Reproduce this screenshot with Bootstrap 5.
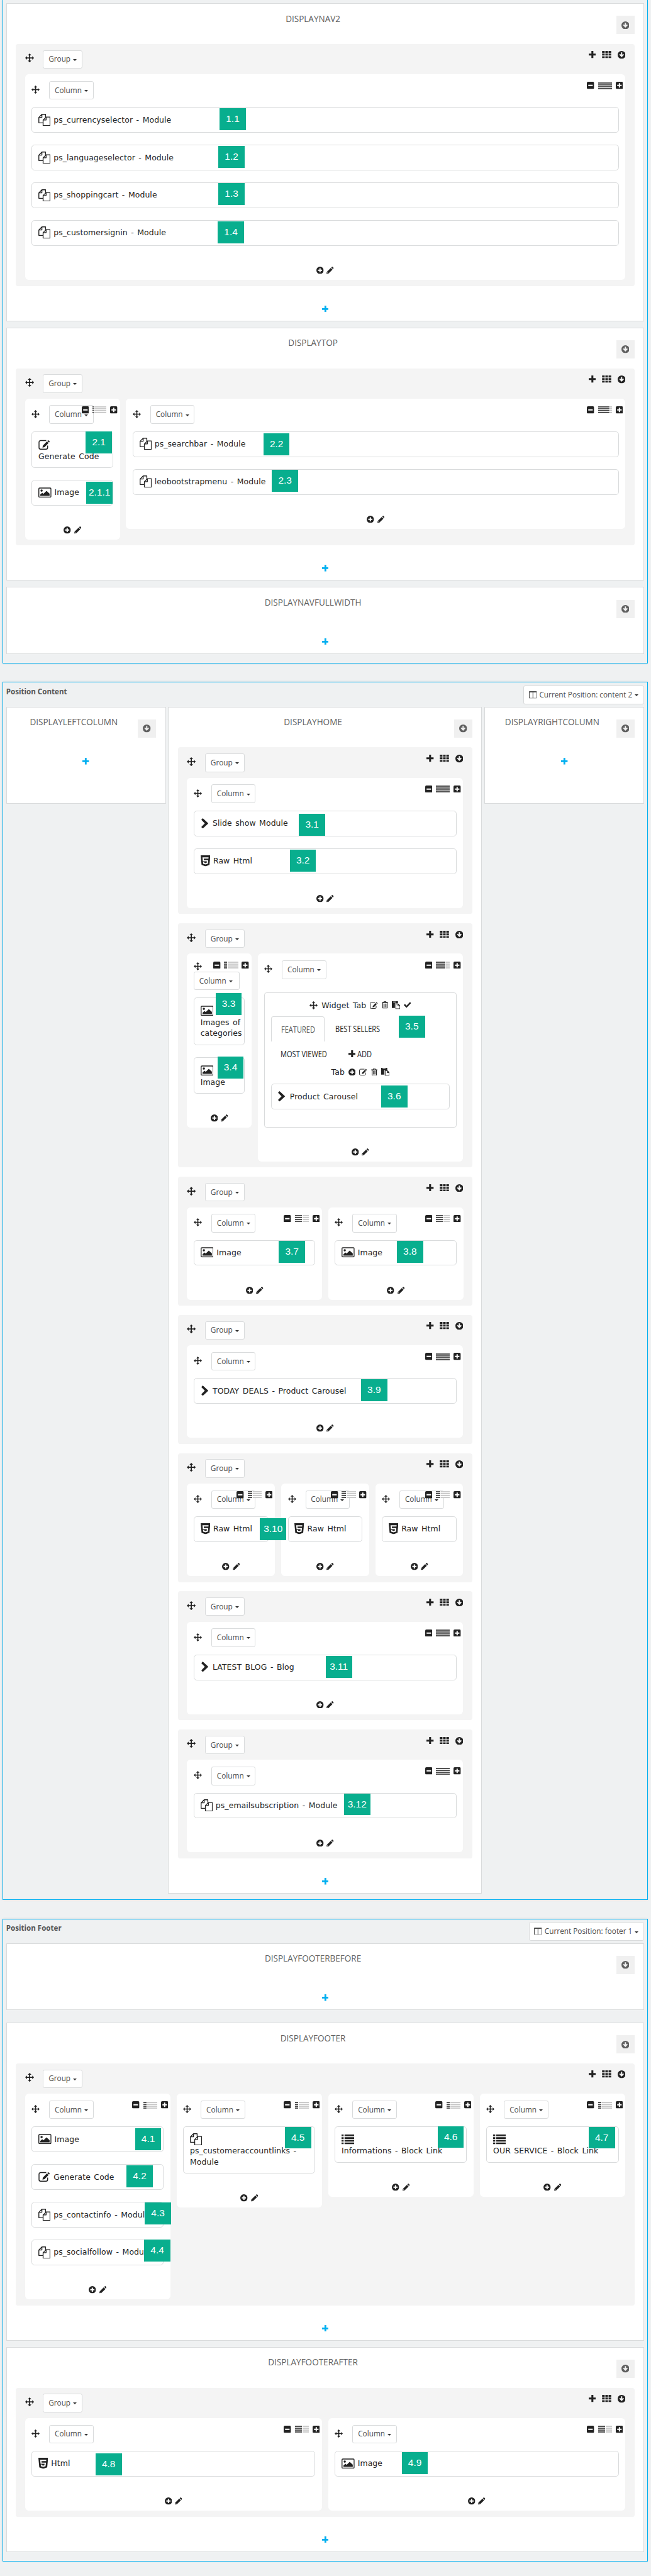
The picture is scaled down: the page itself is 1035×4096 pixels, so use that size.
<!DOCTYPE html>
<html lang="en">
<head>
<meta charset="utf-8">
<meta name="viewport" content="width=device-width, initial-scale=1">
<title>Position editor</title>
<link rel="stylesheet" href="https://cdn.jsdelivr.net/npm/bootstrap@5.3.0/dist/css/bootstrap.min.css">
<style>
html{font-size:9.673px}
body{background:#eff1f2;font-family:"Open Sans",sans-serif;font-size:1.2rem;color:#222;line-height:1.8rem;overflow-x:hidden}
svg{display:block;fill:currentColor;flex:none}
.zone{border:1px solid #00aff0;margin:0 .52rem 3.03rem .4rem;padding:0 .5rem 1.5rem;box-shadow:0 0 .4rem rgba(0,0,0,.08)}
.zone-top{border-top:0;padding-top:.52rem}
.zone-mid{padding-bottom:.96rem}
.zone-last{margin-bottom:0}
.zone-head{height:3.95rem;color:#555}
.zone-head h2{font-size:1.2rem;font-weight:700;line-height:1.8rem;margin:.55rem 0 0}
.zone-head .dd{margin-top:.5rem}
.hook{background:#fff;border:1px solid #d9dbdc;padding:0 1.5rem}
.hook+.hook{margin-top:1.03rem}
.hook+.hook.far{margin-top:2.07rem}
.hook-head{height:6.6rem}
.hook-head h3{font-size:1.4rem;font-weight:400;line-height:2rem;color:#606060;margin:1.5rem 1rem 0 0;white-space:nowrap}
.hook-btn{width:3rem;height:3rem;margin-top:2rem;background:#f0f0f0;color:#606060}
.hook-foot{height:5.68rem;padding-top:3.2rem;color:#00aff0}
.hook-empty .hook-head{height:5.1rem}
.side{width:26.25rem}
.side .hook-foot{height:10.7rem}
.home{width:51.6rem}
.hooks .hook+.hook{margin-top:0}
.grp{background:#f4f4f4;border-radius:.4rem;padding:1rem 1.5rem 1rem}
.grp+.grp{margin-top:1.52rem}
.grp-head{height:4rem}
.grp-head .mv{margin:.6rem 1.5rem 0 0}
.grp-tools{gap:1rem;margin-top:.2rem}
.dd{background:#fff;border:1px solid #d9dbdc;border-radius:.3rem;height:3.05rem;padding:0 .8rem;color:#4c4c4c;font-size:1.22rem;line-height:1;display:inline-flex;align-items:center;white-space:nowrap}
.dd::after{content:"";border:.4rem solid transparent;border-top-color:#333;border-bottom:0;margin-left:.42rem;margin-top:.2rem}
.cols{gap:1rem}
.colbox{background:#fff;border-radius:.6rem;padding:1.1rem 1.1rem 0;flex:1 1 0;min-width:0}
.c-nar{flex:0 0 15.6rem}
.c-slim{flex:0 0 10.6rem}
.col-head{height:4.3rem}
.col-head .mv{margin:.75rem 1.55rem 0 0}
.col-tools{position:absolute;top:1.25rem;right:.4rem;gap:.6rem;color:#222}
.bars{width:2.3rem;height:11px;background:repeating-linear-gradient(transparent 0 2px,#fff 2px 3px),linear-gradient(to right,#555 var(--w),#fff var(--w) calc(var(--w) + 1px),#ccc 0)}
.c-slim .col-head{height:6.1rem;flex-direction:column}
.c-slim .col-head .mv{margin:.25rem 0 .25rem}
.c-slim .col-head .dd{width:7.6rem}
.wgt{position:relative;border:1px solid #d9dbdc;border-radius:.5rem;min-height:4.2rem;margin-bottom:2rem;padding:0 0 .1rem 1rem;gap:.5rem;white-space:nowrap;background:#fff}
.wtx{font-family:"DejaVu Sans",sans-serif;font-size:1.29rem;letter-spacing:.005em;word-spacing:.15rem;color:#222}
.stacked{flex-direction:column;align-items:flex-start;gap:0;padding:1rem 0 .9rem 1rem}
.stacked svg{margin:.2rem 0}
.stacked .i-fi{margin:0}
.num{position:absolute;width:4.3rem;height:3.6rem;background:#08ae8e;color:#fff;font:1.6rem/3.5rem "Liberation Sans",Arial,sans-serif;text-align:center;z-index:3}
.col-foot{height:3.6rem;padding-top:1.45rem;gap:.5rem}
.panel{position:relative;border:1px solid #d9dbdc;border-radius:.4rem;margin:1rem 0 2rem;padding:1rem 1rem 1.05rem;height:22.15rem}
.pline{gap:.6rem;height:1.9rem}
.pline-tab{margin-bottom:1rem}
.tabs{margin:.9rem 0 0;padding:0;list-style:none}
.tabs li{height:4.1rem;line-height:4.1rem;padding-left:1.6rem;margin-right:.2rem;font-size:1.45rem;white-space:nowrap}
.tabs .on{border:1px solid #d9dbdc;border-bottom:0;border-radius:.4rem .4rem 0 0;color:#555;width:8.8rem}
.slimtext{display:inline-block;transform:scaleX(.79);transform-origin:left}
.t2{width:12rem}
.t3{width:10.9rem}
.i-mv{width:1.47rem;height:1.47rem}
.i-mc{width:1.35rem;height:1.35rem}
.i-12{width:1.2rem;height:1.2rem}
.i-11{width:1.1rem;height:1.1rem}
.i-gr{width:1.55rem;height:1.2rem}
.i-13{width:1.3rem;height:1.3rem}
.i-fi{width:2rem;height:2rem}
.i-im{width:2.15rem;height:1.7rem}
.i-h5{width:1.6rem;height:1.8rem}
.i-ch{width:1.2rem;height:1.7rem;margin-left:.1rem;margin-right:.2rem}
.i-ed{width:2rem;height:1.65rem}
.i-li{width:2.1rem;height:1.6rem}
.i-pa{width:1.4rem;height:1.3rem}
.i-tr{width:1.05rem;height:1.2rem}
.i-cl{width:1.3rem;height:1.2rem;margin-right:.4rem}
.i-es{width:1.35rem;height:1.15rem}
</style>
</head>
<body>
<svg width="0" height="0" class="position-absolute">
<symbol id="mv" viewBox="0 0 16 16"><path d="M8 0l3.2 3.3H9v3.7h3.7V4.8L16 8l-3.3 3.2V9H9v3.7h2.2L8 16l-3.2-3.3H7V9H3.3v2.2L0 8l3.3-3.2V7H7V3.3H4.8z"/></symbol>
<symbol id="pl" viewBox="0 0 12 12"><path d="M4.4 0h3.200v4.400H12v3.200H7.600V12H4.400V7.600H0V4.400h4.400z"/></symbol>
<symbol id="gr" viewBox="0 0 15 12"><path d="M0 0h4.300v3.300H0zM5.400 0h4.200v3.300H5.400zM10.700 0H15v3.300h-4.300zM0 4.400h4.300v3.200H0zM5.400 4.400h4.200v3.200H5.400zM10.700 4.400H15v3.200h-4.300zM0 8.700h4.300V12H0zM5.400 8.700h4.200V12H5.400zM10.700 8.700H15V12h-4.300z"/></symbol>
<symbol id="dn" viewBox="0 0 13 13"><path fill-rule="evenodd" d="M6.500 0a6.500 6.500 0 1 1 0 13 6.500 6.500 0 0 1 0-13zM5.500 2.300v4L4 4.900 2.600 6.300l3.900 4 3.900-4L9 4.900 7.500 6.300v-4z"/></symbol>
<symbol id="cp" viewBox="0 0 12 12"><path fill-rule="evenodd" d="M6 0a6 6 0 1 1 0 12A6 6 0 0 1 6 0zM5 2.600V5H2.600v2H5v2.400h2V7h2.400V5H7V2.600z"/></symbol>
<symbol id="sm" viewBox="0 0 12 12"><path fill-rule="evenodd" d="M2 0h8a2 2 0 0 1 2 2v8a2 2 0 0 1-2 2H2a2 2 0 0 1-2-2V2a2 2 0 0 1 2-2zM2.300 5v2h7.400V5z"/></symbol>
<symbol id="sp" viewBox="0 0 12 12"><path fill-rule="evenodd" d="M2 0h8a2 2 0 0 1 2 2v8a2 2 0 0 1-2 2H2a2 2 0 0 1-2-2V2a2 2 0 0 1 2-2zM5 2.300V5H2.300v2H5v2.700h2V7h2.700V5H7V2.300z"/></symbol>
<symbol id="pe" viewBox="0 0 12 12"><path fill-rule="evenodd" d="M8.800.5a1.100 1.100 0 0 1 1.600 0l1.100 1.100a1.100 1.100 0 0 1 0 1.600l-.9.9-2.700-2.700zM7.200 2.100l2.700 2.700L3.200 11.500 0 12l.5-3.200zM1.600 9.300l-.3 1.400 1.400-.3z"/></symbol>
<symbol id="fi" viewBox="0 0 20 20"><path fill="none" stroke="currentColor" stroke-width="1.400" stroke-linejoin="round" d="M7.500 14.800H.8V5.800l5-5h6v4.500M5.800.8v5h-5M12.700 5.300h6.500v13.900H7.800v-9zM12.700 5.300v4.900H7.800"/></symbol>
<symbol id="im" viewBox="0 0 22 17"><rect x=".8" y=".8" width="20.400" height="15.400" rx="1.300" fill="none" stroke="currentColor" stroke-width="1.500"/><circle cx="5.400" cy="5.200" r="1.900"/><path d="M3.200 14v-2.300l3.300-3 2 2L13.700 5.500l5.200 5V14z"/></symbol>
<symbol id="h5" viewBox="0 0 16 18"><path fill-rule="evenodd" d="M0 0h16l-1.500 15.800L8 18l-6.500-2.200zM3 3.300l.6 6.600h6.600l-.3 2.400-1.900.6-1.900-.6-.1-1.200H3.900l.3 2.800L8 15l3.800-1.100.7-6H5.300l-.2-2.500h7.700l.2-2.100z"/></symbol>
<symbol id="ch" viewBox="0 0 12 17"><path d="M2.500 0L11.700 8.500 2.500 17 0 14.500l5.800-6L0 2.500z"/></symbol>
<symbol id="ed" viewBox="0 0 20 17"><path fill="none" stroke="currentColor" stroke-width="1.500" d="M13 1.600H3.500A2.700 2.700 0 0 0 .8 4.300v9.200a2.700 2.700 0 0 0 2.700 2.700h9.200a2.700 2.700 0 0 0 2.700-2.700V10"/><path d="M16.300.8l2.900 2.600-1.500 1.600-2.900-2.600zM14 3.200l2.900 2.600-6.700 7-3.600.7.700-3.500z"/></symbol>
<symbol id="li" viewBox="0 0 21 16"><path d="M0 0h3.400v2.800H0zM5 0h16v2.800H5zM0 4.400h3.400v2.800H0zM5 4.400h16v2.800H5zM0 8.800h3.400v2.800H0zM5 8.800h16v2.800H5zM0 13.200h3.400V16H0zM5 13.200h16V16H5z"/></symbol>
<symbol id="tr" viewBox="0 0 10 12"><path fill-rule="evenodd" d="M3.200 0h3.600l.7 1.600H10v1.200h-.8V11q0 1-1 1H1.800q-1 0-1-1V2.800H0V1.600h2.500zM2 3v7.800h6V3zM2.800 4h.9v5.800h-.9zM4.600 4h.9v5.800h-.9zM6.400 4h.9v5.800h-.9zM3.800 1.600h2.400l-.2-.7H4z"/></symbol>
<symbol id="pa" viewBox="0 0 14 13"><path fill-rule="evenodd" d="M0 0h10v3.600H5V11H0zM2.300.8v1h5v-1z"/><path fill="none" stroke="currentColor" stroke-width="1.100" d="M6.500 4.700h3.800l3 3v4.700H6.500zM10.200 4.700v3.100h3.100"/></symbol>
<symbol id="ck" viewBox="0 0 12 10"><path d="M4.500 9.800L0 5.400l1.800-1.900 2.700 2.700L10.200.3 12 2.200z"/></symbol>
<symbol id="cl" viewBox="0 0 13 12"><path fill-rule="evenodd" d="M1 0h11q1 0 1 1v10q0 1-1 1H1q-1 0-1-1V1q0-1 1-1zM1 2v9h5V2zM7 2v9h5V2z"/></symbol>
</svg>

<main>
<section class="zone zone-top">
 <div class="hook">
  <div class="hook-head d-flex align-items-start"><h3 class="flex-fill text-center">DISPLAYNAV2</h3><span class="hook-btn d-flex align-items-center justify-content-center"><svg class="i-13"><use href="#dn"/></svg></span></div>
  <div class="grp">
   <div class="grp-head d-flex align-items-start"><svg class="i-mv mv"><use href="#mv"/></svg><span class="dd">Group</span><span class="grp-tools d-flex ms-auto"><svg class="i-12"><use href="#pl"/></svg><svg class="i-gr"><use href="#gr"/></svg><svg class="i-13"><use href="#dn"/></svg></span></div>
   <div class="cols d-flex align-items-start">
    <div class="colbox position-relative">
     <div class="col-head d-flex align-items-start"><svg class="i-mc mv"><use href="#mv"/></svg><span class="dd">Column</span></div>
     <div class="col-tools d-flex align-items-center"><svg class="i-12"><use href="#sm"/></svg><span class="bars" style="--w:100%"></span><svg class="i-12"><use href="#sp"/></svg></div>
     <div class="wgt d-flex align-items-center"><svg class="i-fi"><use href="#fi"/></svg><span class="wtx">ps_currencyselector - Module</span><span class="num" style="left:30.8rem;top:.1rem">1.1</span></div>
     <div class="wgt d-flex align-items-center"><svg class="i-fi"><use href="#fi"/></svg><span class="wtx">ps_languageselector - Module</span><span class="num" style="left:30.6rem;top:.1rem">1.2</span></div>
     <div class="wgt d-flex align-items-center"><svg class="i-fi"><use href="#fi"/></svg><span class="wtx">ps_shoppingcart - Module</span><span class="num" style="left:30.6rem;top:0">1.3</span></div>
     <div class="wgt d-flex align-items-center"><svg class="i-fi"><use href="#fi"/></svg><span class="wtx">ps_customersignin - Module</span><span class="num" style="left:30.5rem;top:.1rem">1.4</span></div>
     <div class="col-foot d-flex justify-content-center"><svg class="i-12"><use href="#cp"/></svg><svg class="i-12"><use href="#pe"/></svg></div>
    </div>
   </div>
  </div>
  <div class="hook-foot d-flex justify-content-center"><svg class="i-11"><use href="#pl"/></svg></div>
 </div>

 <div class="hook">
  <div class="hook-head d-flex align-items-start"><h3 class="flex-fill text-center">DISPLAYTOP</h3><span class="hook-btn d-flex align-items-center justify-content-center"><svg class="i-13"><use href="#dn"/></svg></span></div>
  <div class="grp">
   <div class="grp-head d-flex align-items-start"><svg class="i-mv mv"><use href="#mv"/></svg><span class="dd">Group</span><span class="grp-tools d-flex ms-auto"><svg class="i-12"><use href="#pl"/></svg><svg class="i-gr"><use href="#gr"/></svg><svg class="i-13"><use href="#dn"/></svg></span></div>
   <div class="cols d-flex align-items-start">
    <div class="colbox c-nar position-relative">
     <div class="col-head d-flex align-items-start"><svg class="i-mc mv"><use href="#mv"/></svg><span class="dd">Column</span></div>
     <div class="col-tools d-flex align-items-center"><svg class="i-12"><use href="#sm"/></svg><span class="bars" style="--w:10%"></span><svg class="i-12"><use href="#sp"/></svg></div>
     <div class="wgt d-flex stacked"><svg class="i-ed"><use href="#ed"/></svg><span class="wtx">Generate Code</span><span class="num" style="left:8.8rem;top:-.1rem">2.1</span></div>
     <div class="wgt d-flex align-items-center"><svg class="i-im"><use href="#im"/></svg><span class="wtx">Image</span><span class="num" style="left:8.9rem;top:.2rem">2.1.1</span></div>
     <div class="col-foot d-flex justify-content-center"><svg class="i-12"><use href="#cp"/></svg><svg class="i-12"><use href="#pe"/></svg></div>
    </div>
    <div class="colbox position-relative">
     <div class="col-head d-flex align-items-start"><svg class="i-mc mv"><use href="#mv"/></svg><span class="dd">Column</span></div>
     <div class="col-tools d-flex align-items-center"><svg class="i-12"><use href="#sm"/></svg><span class="bars" style="--w:81%"></span><svg class="i-12"><use href="#sp"/></svg></div>
     <div class="wgt d-flex align-items-center"><svg class="i-fi"><use href="#fi"/></svg><span class="wtx">ps_searchbar - Module</span><span class="num" style="left:21.4rem;top:.2rem">2.2</span></div>
     <div class="wgt d-flex align-items-center"><svg class="i-fi"><use href="#fi"/></svg><span class="wtx">leobootstrapmenu - Module</span><span class="num" style="left:22.8rem;top:0">2.3</span></div>
     <div class="col-foot d-flex justify-content-center"><svg class="i-12"><use href="#cp"/></svg><svg class="i-12"><use href="#pe"/></svg></div>
    </div>
   </div>
  </div>
  <div class="hook-foot d-flex justify-content-center"><svg class="i-11"><use href="#pl"/></svg></div>
 </div>

 <div class="hook hook-empty">
  <div class="hook-head d-flex align-items-start"><h3 class="flex-fill text-center">DISPLAYNAVFULLWIDTH</h3><span class="hook-btn d-flex align-items-center justify-content-center"><svg class="i-13"><use href="#dn"/></svg></span></div>
  <div class="hook-foot d-flex justify-content-center"><svg class="i-11"><use href="#pl"/></svg></div>
 </div>
</section>

<section class="zone zone-mid">
 <div class="zone-head d-flex align-items-start justify-content-between"><h2>Position Content</h2><span class="dd"><svg class="i-cl"><use href="#cl"/></svg>Current Position: content 2</span></div>
 <div class="hooks d-flex align-items-start justify-content-between">
  <div class="hook hook-empty side">
   <div class="hook-head d-flex align-items-start"><h3 class="flex-fill text-center">DISPLAYLEFTCOLUMN</h3><span class="hook-btn d-flex align-items-center justify-content-center"><svg class="i-13"><use href="#dn"/></svg></span></div>
   <div class="hook-foot d-flex justify-content-center"><svg class="i-11"><use href="#pl"/></svg></div>
  </div>
  <div class="hook home">
   <div class="hook-head d-flex align-items-start"><h3 class="flex-fill text-center">DISPLAYHOME</h3><span class="hook-btn d-flex align-items-center justify-content-center"><svg class="i-13"><use href="#dn"/></svg></span></div>
   <div class="grp">
    <div class="grp-head d-flex align-items-start"><svg class="i-mv mv"><use href="#mv"/></svg><span class="dd">Group</span><span class="grp-tools d-flex ms-auto"><svg class="i-12"><use href="#pl"/></svg><svg class="i-gr"><use href="#gr"/></svg><svg class="i-13"><use href="#dn"/></svg></span></div>
    <div class="cols d-flex align-items-start">
     <div class="colbox position-relative">
      <div class="col-head d-flex align-items-start"><svg class="i-mc mv"><use href="#mv"/></svg><span class="dd">Column</span></div>
      <div class="col-tools d-flex align-items-center"><svg class="i-12"><use href="#sm"/></svg><span class="bars" style="--w:100%"></span><svg class="i-12"><use href="#sp"/></svg></div>
      <div class="wgt d-flex align-items-center"><svg class="i-ch"><use href="#ch"/></svg><span class="wtx">Slide show Module</span><span class="num" style="left:17.2rem;top:.4rem">3.1</span></div>
      <div class="wgt d-flex align-items-center"><svg class="i-h5"><use href="#h5"/></svg><span class="wtx">Raw Html</span><span class="num" style="left:15.7rem;top:.1rem">3.2</span></div>
      <div class="col-foot d-flex justify-content-center"><svg class="i-12"><use href="#cp"/></svg><svg class="i-12"><use href="#pe"/></svg></div>
     </div>
    </div>
   </div>
   <div class="grp">
    <div class="grp-head d-flex align-items-start"><svg class="i-mv mv"><use href="#mv"/></svg><span class="dd">Group</span><span class="grp-tools d-flex ms-auto"><svg class="i-12"><use href="#pl"/></svg><svg class="i-gr"><use href="#gr"/></svg><svg class="i-13"><use href="#dn"/></svg></span></div>
    <div class="cols d-flex align-items-start">
     <div class="colbox c-slim position-relative">
      <div class="col-head d-flex"><svg class="i-mc mv"><use href="#mv"/></svg><span class="dd">Column</span></div>
      <div class="col-tools d-flex align-items-center"><svg class="i-12"><use href="#sm"/></svg><span class="bars" style="--w:22%"></span><svg class="i-12"><use href="#sp"/></svg></div>
      <div class="wgt d-flex stacked"><svg class="i-im"><use href="#im"/></svg><span class="wtx">Images of<br>categories</span><span class="num" style="left:3.5rem;top:-.8rem">3.3</span></div>
      <div class="wgt d-flex stacked"><svg class="i-im"><use href="#im"/></svg><span class="wtx">Image</span><span class="num" style="left:3.8rem;top:-.2rem">3.4</span></div>
      <div class="col-foot d-flex justify-content-center"><svg class="i-12"><use href="#cp"/></svg><svg class="i-12"><use href="#pe"/></svg></div>
     </div>
     <div class="colbox position-relative">
      <div class="col-head d-flex align-items-start"><svg class="i-mc mv"><use href="#mv"/></svg><span class="dd">Column</span></div>
      <div class="col-tools d-flex align-items-center"><svg class="i-12"><use href="#sm"/></svg><span class="bars" style="--w:66%"></span><svg class="i-12"><use href="#sp"/></svg></div>
      <div class="panel">
       <div class="pline d-flex align-items-center justify-content-center"><svg class="i-mc"><use href="#mv"/></svg><span class="wtx">Widget Tab</span><svg class="i-es"><use href="#ed"/></svg><svg class="i-tr"><use href="#tr"/></svg><svg class="i-pa"><use href="#pa"/></svg><svg class="i-12"><use href="#ck"/></svg></div>
       <ul class="tabs d-flex flex-wrap">
        <li class="on"><span class="slimtext">FEATURED</span></li>
        <li class="t2"><span class="slimtext">BEST SELLERS</span></li>
        <li class="t3"><span class="slimtext">MOST VIEWED</span></li>
        <li class="d-flex align-items-center"><svg class="i-12 me-1"><use href="#pl"/></svg><span class="slimtext">ADD</span></li>
       </ul>
       <div class="pline pline-tab d-flex align-items-center justify-content-center"><span class="wtx">Tab</span><svg class="i-12"><use href="#cp"/></svg><svg class="i-es"><use href="#ed"/></svg><svg class="i-tr"><use href="#tr"/></svg><svg class="i-pa"><use href="#pa"/></svg></div>
       <div class="wgt d-flex align-items-center"><svg class="i-ch"><use href="#ch"/></svg><span class="wtx">Product Carousel</span><span class="num" style="left:18rem;top:.2rem">3.6</span></div>
       <span class="num" style="left:22rem;top:3.7rem">3.5</span>
      </div>
      <div class="col-foot d-flex justify-content-center"><svg class="i-12"><use href="#cp"/></svg><svg class="i-12"><use href="#pe"/></svg></div>
     </div>
    </div>
   </div>
   <div class="grp">
    <div class="grp-head d-flex align-items-start"><svg class="i-mv mv"><use href="#mv"/></svg><span class="dd">Group</span><span class="grp-tools d-flex ms-auto"><svg class="i-12"><use href="#pl"/></svg><svg class="i-gr"><use href="#gr"/></svg><svg class="i-13"><use href="#dn"/></svg></span></div>
    <div class="cols d-flex align-items-start">
     <div class="colbox position-relative">
      <div class="col-head d-flex align-items-start"><svg class="i-mc mv"><use href="#mv"/></svg><span class="dd">Column</span></div>
      <div class="col-tools d-flex align-items-center"><svg class="i-12"><use href="#sm"/></svg><span class="bars" style="--w:49%"></span><svg class="i-12"><use href="#sp"/></svg></div>
      <div class="wgt d-flex align-items-center"><svg class="i-im"><use href="#im"/></svg><span class="wtx">Image</span><span class="num" style="left:13.9rem;top:0">3.7</span></div>
      <div class="col-foot d-flex justify-content-center"><svg class="i-12"><use href="#cp"/></svg><svg class="i-12"><use href="#pe"/></svg></div>
     </div>
     <div class="colbox position-relative">
      <div class="col-head d-flex align-items-start"><svg class="i-mc mv"><use href="#mv"/></svg><span class="dd">Column</span></div>
      <div class="col-tools d-flex align-items-center"><svg class="i-12"><use href="#sm"/></svg><span class="bars" style="--w:49%"></span><svg class="i-12"><use href="#sp"/></svg></div>
      <div class="wgt d-flex align-items-center"><svg class="i-im"><use href="#im"/></svg><span class="wtx">Image</span><span class="num" style="left:10.1rem;top:0">3.8</span></div>
      <div class="col-foot d-flex justify-content-center"><svg class="i-12"><use href="#cp"/></svg><svg class="i-12"><use href="#pe"/></svg></div>
     </div>
    </div>
   </div>
   <div class="grp">
    <div class="grp-head d-flex align-items-start"><svg class="i-mv mv"><use href="#mv"/></svg><span class="dd">Group</span><span class="grp-tools d-flex ms-auto"><svg class="i-12"><use href="#pl"/></svg><svg class="i-gr"><use href="#gr"/></svg><svg class="i-13"><use href="#dn"/></svg></span></div>
    <div class="cols d-flex align-items-start">
     <div class="colbox position-relative">
      <div class="col-head d-flex align-items-start"><svg class="i-mc mv"><use href="#mv"/></svg><span class="dd">Column</span></div>
      <div class="col-tools d-flex align-items-center"><svg class="i-12"><use href="#sm"/></svg><span class="bars" style="--w:100%"></span><svg class="i-12"><use href="#sp"/></svg></div>
      <div class="wgt d-flex align-items-center"><svg class="i-ch"><use href="#ch"/></svg><span class="wtx">TODAY DEALS - Product Carousel</span><span class="num" style="left:27.4rem;top:.1rem">3.9</span></div>
      <div class="col-foot d-flex justify-content-center"><svg class="i-12"><use href="#cp"/></svg><svg class="i-12"><use href="#pe"/></svg></div>
     </div>
    </div>
   </div>
   <div class="grp">
    <div class="grp-head d-flex align-items-start"><svg class="i-mv mv"><use href="#mv"/></svg><span class="dd">Group</span><span class="grp-tools d-flex ms-auto"><svg class="i-12"><use href="#pl"/></svg><svg class="i-gr"><use href="#gr"/></svg><svg class="i-13"><use href="#dn"/></svg></span></div>
    <div class="cols d-flex align-items-start">
     <div class="colbox position-relative">
      <div class="col-head d-flex align-items-start"><svg class="i-mc mv"><use href="#mv"/></svg><span class="dd">Column</span></div>
      <div class="col-tools d-flex align-items-center"><svg class="i-12"><use href="#sm"/></svg><span class="bars" style="--w:30%"></span><svg class="i-12"><use href="#sp"/></svg></div>
      <div class="wgt d-flex align-items-center"><svg class="i-h5"><use href="#h5"/></svg><span class="wtx">Raw Html</span><span class="num" style="left:10.8rem;top:.2rem">3.10</span></div>
      <div class="col-foot d-flex justify-content-center"><svg class="i-12"><use href="#cp"/></svg><svg class="i-12"><use href="#pe"/></svg></div>
     </div>
     <div class="colbox position-relative">
      <div class="col-head d-flex align-items-start"><svg class="i-mc mv"><use href="#mv"/></svg><span class="dd">Column</span></div>
      <div class="col-tools d-flex align-items-center"><svg class="i-12"><use href="#sm"/></svg><span class="bars" style="--w:30%"></span><svg class="i-12"><use href="#sp"/></svg></div>
      <div class="wgt d-flex align-items-center"><svg class="i-h5"><use href="#h5"/></svg><span class="wtx">Raw Html</span></div>
      <div class="col-foot d-flex justify-content-center"><svg class="i-12"><use href="#cp"/></svg><svg class="i-12"><use href="#pe"/></svg></div>
     </div>
     <div class="colbox position-relative">
      <div class="col-head d-flex align-items-start"><svg class="i-mc mv"><use href="#mv"/></svg><span class="dd">Column</span></div>
      <div class="col-tools d-flex align-items-center"><svg class="i-12"><use href="#sm"/></svg><span class="bars" style="--w:30%"></span><svg class="i-12"><use href="#sp"/></svg></div>
      <div class="wgt d-flex align-items-center"><svg class="i-h5"><use href="#h5"/></svg><span class="wtx">Raw Html</span></div>
      <div class="col-foot d-flex justify-content-center"><svg class="i-12"><use href="#cp"/></svg><svg class="i-12"><use href="#pe"/></svg></div>
     </div>
    </div>
   </div>
   <div class="grp">
    <div class="grp-head d-flex align-items-start"><svg class="i-mv mv"><use href="#mv"/></svg><span class="dd">Group</span><span class="grp-tools d-flex ms-auto"><svg class="i-12"><use href="#pl"/></svg><svg class="i-gr"><use href="#gr"/></svg><svg class="i-13"><use href="#dn"/></svg></span></div>
    <div class="cols d-flex align-items-start">
     <div class="colbox position-relative">
      <div class="col-head d-flex align-items-start"><svg class="i-mc mv"><use href="#mv"/></svg><span class="dd">Column</span></div>
      <div class="col-tools d-flex align-items-center"><svg class="i-12"><use href="#sm"/></svg><span class="bars" style="--w:100%"></span><svg class="i-12"><use href="#sp"/></svg></div>
      <div class="wgt d-flex align-items-center"><svg class="i-ch"><use href="#ch"/></svg><span class="wtx">LATEST BLOG - Blog</span><span class="num" style="left:21.6rem;top:.1rem">3.11</span></div>
      <div class="col-foot d-flex justify-content-center"><svg class="i-12"><use href="#cp"/></svg><svg class="i-12"><use href="#pe"/></svg></div>
     </div>
    </div>
   </div>
   <div class="grp">
    <div class="grp-head d-flex align-items-start"><svg class="i-mv mv"><use href="#mv"/></svg><span class="dd">Group</span><span class="grp-tools d-flex ms-auto"><svg class="i-12"><use href="#pl"/></svg><svg class="i-gr"><use href="#gr"/></svg><svg class="i-13"><use href="#dn"/></svg></span></div>
    <div class="cols d-flex align-items-start">
     <div class="colbox position-relative">
      <div class="col-head d-flex align-items-start"><svg class="i-mc mv"><use href="#mv"/></svg><span class="dd">Column</span></div>
      <div class="col-tools d-flex align-items-center"><svg class="i-12"><use href="#sm"/></svg><span class="bars" style="--w:100%"></span><svg class="i-12"><use href="#sp"/></svg></div>
      <div class="wgt d-flex align-items-center"><svg class="i-fi"><use href="#fi"/></svg><span class="wtx">ps_emailsubscription - Module</span><span class="num" style="left:24.6rem;top:0">3.12</span></div>
      <div class="col-foot d-flex justify-content-center"><svg class="i-12"><use href="#cp"/></svg><svg class="i-12"><use href="#pe"/></svg></div>
     </div>
    </div>
   </div>
   <div class="hook-foot d-flex justify-content-center"><svg class="i-11"><use href="#pl"/></svg></div>
  </div>
  <div class="hook hook-empty side">
   <div class="hook-head d-flex align-items-start"><h3 class="flex-fill text-center">DISPLAYRIGHTCOLUMN</h3><span class="hook-btn d-flex align-items-center justify-content-center"><svg class="i-13"><use href="#dn"/></svg></span></div>
   <div class="hook-foot d-flex justify-content-center"><svg class="i-11"><use href="#pl"/></svg></div>
  </div>
 </div>
</section>

<section class="zone zone-last">
 <div class="zone-head d-flex align-items-start justify-content-between"><h2>Position Footer</h2><span class="dd"><svg class="i-cl"><use href="#cl"/></svg>Current Position: footer 1</span></div>
 <div class="hook hook-empty">
  <div class="hook-head d-flex align-items-start"><h3 class="flex-fill text-center">DISPLAYFOOTERBEFORE</h3><span class="hook-btn d-flex align-items-center justify-content-center"><svg class="i-13"><use href="#dn"/></svg></span></div>
  <div class="hook-foot d-flex justify-content-center"><svg class="i-11"><use href="#pl"/></svg></div>
 </div>
 <div class="hook far">
  <div class="hook-head d-flex align-items-start"><h3 class="flex-fill text-center">DISPLAYFOOTER</h3><span class="hook-btn d-flex align-items-center justify-content-center"><svg class="i-13"><use href="#dn"/></svg></span></div>
  <div class="grp">
   <div class="grp-head d-flex align-items-start"><svg class="i-mv mv"><use href="#mv"/></svg><span class="dd">Group</span><span class="grp-tools d-flex ms-auto"><svg class="i-12"><use href="#pl"/></svg><svg class="i-gr"><use href="#gr"/></svg><svg class="i-13"><use href="#dn"/></svg></span></div>
   <div class="cols d-flex align-items-start">
    <div class="colbox position-relative">
     <div class="col-head d-flex align-items-start"><svg class="i-mc mv"><use href="#mv"/></svg><span class="dd">Column</span></div>
     <div class="col-tools d-flex align-items-center"><svg class="i-12"><use href="#sm"/></svg><span class="bars" style="--w:22%"></span><svg class="i-12"><use href="#sp"/></svg></div>
     <div class="wgt d-flex align-items-center"><svg class="i-im"><use href="#im"/></svg><span class="wtx">Image</span><span class="num" style="left:16.9rem;top:.2rem">4.1</span></div>
     <div class="wgt d-flex align-items-center"><svg class="i-ed"><use href="#ed"/></svg><span class="wtx">Generate Code</span><span class="num" style="left:15.5rem;top:.1rem">4.2</span></div>
     <div class="wgt d-flex align-items-center"><svg class="i-fi"><use href="#fi"/></svg><span class="wtx">ps_contactinfo - Module</span><span class="num" style="left:18.5rem;top:0">4.3</span></div>
     <div class="wgt d-flex align-items-center"><svg class="i-fi"><use href="#fi"/></svg><span class="wtx">ps_socialfollow - Module</span><span class="num" style="left:18.4rem;top:-.1rem">4.4</span></div>
     <div class="col-foot d-flex justify-content-center"><svg class="i-12"><use href="#cp"/></svg><svg class="i-12"><use href="#pe"/></svg></div>
    </div>
    <div class="colbox position-relative">
     <div class="col-head d-flex align-items-start"><svg class="i-mc mv"><use href="#mv"/></svg><span class="dd">Column</span></div>
     <div class="col-tools d-flex align-items-center"><svg class="i-12"><use href="#sm"/></svg><span class="bars" style="--w:22%"></span><svg class="i-12"><use href="#sp"/></svg></div>
     <div class="wgt d-flex stacked"><svg class="i-fi"><use href="#fi"/></svg><span class="wtx">ps_customeraccountlinks -<br>Module</span><span class="num" style="left:16.6rem;top:-.1rem">4.5</span></div>
     <div class="col-foot d-flex justify-content-center"><svg class="i-12"><use href="#cp"/></svg><svg class="i-12"><use href="#pe"/></svg></div>
    </div>
    <div class="colbox position-relative">
     <div class="col-head d-flex align-items-start"><svg class="i-mc mv"><use href="#mv"/></svg><span class="dd">Column</span></div>
     <div class="col-tools d-flex align-items-center"><svg class="i-12"><use href="#sm"/></svg><span class="bars" style="--w:22%"></span><svg class="i-12"><use href="#sp"/></svg></div>
     <div class="wgt d-flex stacked"><svg class="i-li"><use href="#li"/></svg><span class="wtx">Informations - Block Link</span><span class="num" style="left:16.8rem;top:-.2rem">4.6</span></div>
     <div class="col-foot d-flex justify-content-center"><svg class="i-12"><use href="#cp"/></svg><svg class="i-12"><use href="#pe"/></svg></div>
    </div>
    <div class="colbox position-relative">
     <div class="col-head d-flex align-items-start"><svg class="i-mc mv"><use href="#mv"/></svg><span class="dd">Column</span></div>
     <div class="col-tools d-flex align-items-center"><svg class="i-12"><use href="#sm"/></svg><span class="bars" style="--w:22%"></span><svg class="i-12"><use href="#sp"/></svg></div>
     <div class="wgt d-flex stacked"><svg class="i-li"><use href="#li"/></svg><span class="wtx">OUR SERVICE - Block Link</span><span class="num" style="left:16.7rem;top:-.1rem">4.7</span></div>
     <div class="col-foot d-flex justify-content-center"><svg class="i-12"><use href="#cp"/></svg><svg class="i-12"><use href="#pe"/></svg></div>
    </div>
   </div>
  </div>
  <div class="hook-foot d-flex justify-content-center"><svg class="i-11"><use href="#pl"/></svg></div>
 </div>
 <div class="hook">
  <div class="hook-head d-flex align-items-start"><h3 class="flex-fill text-center">DISPLAYFOOTERAFTER</h3><span class="hook-btn d-flex align-items-center justify-content-center"><svg class="i-13"><use href="#dn"/></svg></span></div>
  <div class="grp">
   <div class="grp-head d-flex align-items-start"><svg class="i-mv mv"><use href="#mv"/></svg><span class="dd">Group</span><span class="grp-tools d-flex ms-auto"><svg class="i-12"><use href="#pl"/></svg><svg class="i-gr"><use href="#gr"/></svg><svg class="i-13"><use href="#dn"/></svg></span></div>
   <div class="cols d-flex align-items-start">
    <div class="colbox position-relative">
     <div class="col-head d-flex align-items-start"><svg class="i-mc mv"><use href="#mv"/></svg><span class="dd">Column</span></div>
     <div class="col-tools d-flex align-items-center"><svg class="i-12"><use href="#sm"/></svg><span class="bars" style="--w:49%"></span><svg class="i-12"><use href="#sp"/></svg></div>
     <div class="wgt d-flex align-items-center"><svg class="i-h5"><use href="#h5"/></svg><span class="wtx">Html</span><span class="num" style="left:10.4rem;top:.3rem">4.8</span></div>
     <div class="col-foot d-flex justify-content-center"><svg class="i-12"><use href="#cp"/></svg><svg class="i-12"><use href="#pe"/></svg></div>
    </div>
    <div class="colbox position-relative">
     <div class="col-head d-flex align-items-start"><svg class="i-mc mv"><use href="#mv"/></svg><span class="dd">Column</span></div>
     <div class="col-tools d-flex align-items-center"><svg class="i-12"><use href="#sm"/></svg><span class="bars" style="--w:49%"></span><svg class="i-12"><use href="#sp"/></svg></div>
     <div class="wgt d-flex align-items-center"><svg class="i-im"><use href="#im"/></svg><span class="wtx">Image</span><span class="num" style="left:10.9rem;top:.1rem">4.9</span></div>
     <div class="col-foot d-flex justify-content-center"><svg class="i-12"><use href="#cp"/></svg><svg class="i-12"><use href="#pe"/></svg></div>
    </div>
   </div>
  </div>
  <div class="hook-foot d-flex justify-content-center"><svg class="i-11"><use href="#pl"/></svg></div>
 </div>
</section>
</main>
<script src="https://cdn.jsdelivr.net/npm/bootstrap@5.3.0/dist/js/bootstrap.bundle.min.js"></script>
</body>
</html>
